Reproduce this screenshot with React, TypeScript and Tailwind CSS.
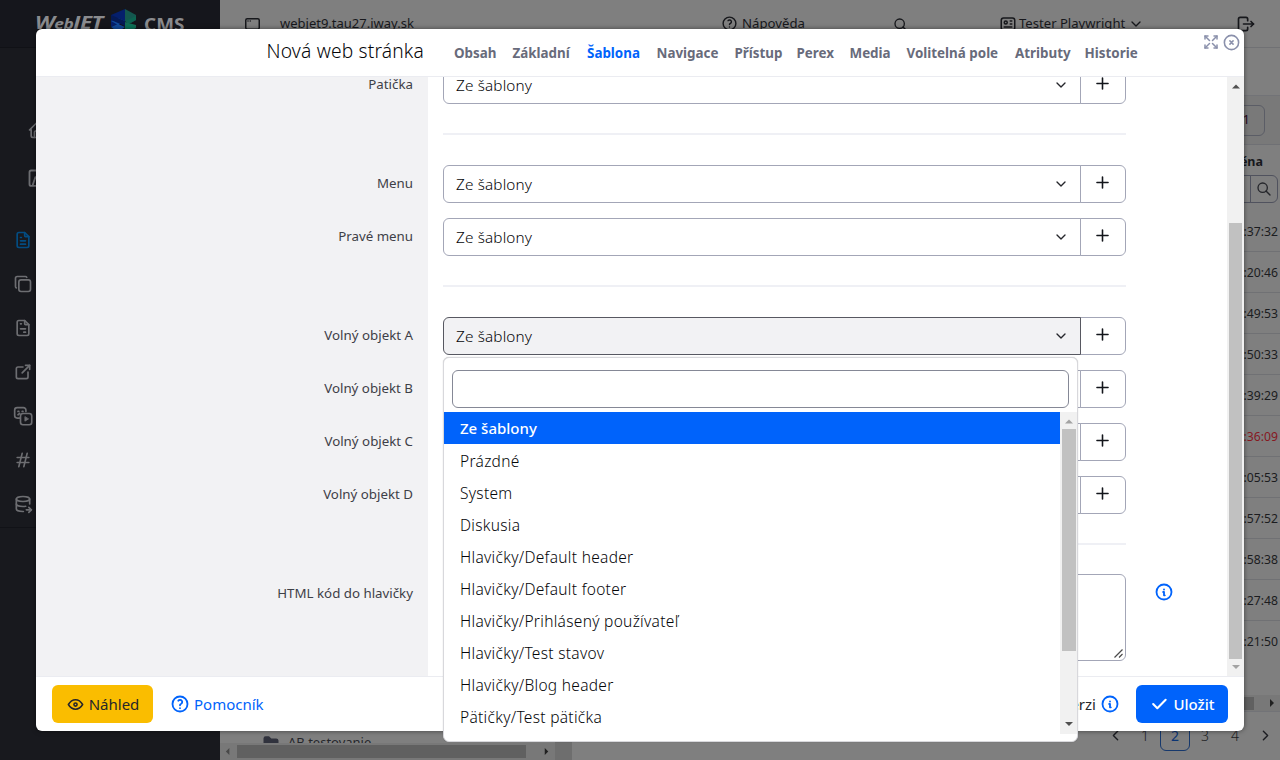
import {
  TbFileText, TbCopy, TbExternalLink, TbHash, TbDatabaseExport, TbHelp, TbInfoCircle, TbEye, TbArrowsMaximize,
  TbCircleX, TbAppWindow, TbId, TbLogout, TbSearch, TbChevronDown, TbChevronLeft, TbChevronRight, TbHome,
  TbPlus, TbCheck, TbFileInvoice, TbFolderFilled,
} from 'react-icons/tb';

const tabs = [
  { label: 'Obsah', cls: 'w-[58.5px]' },
  { label: 'Základní', cls: 'w-[74.5px]' },
  { label: 'Šablona', cls: 'w-[69.5px] text-[#0063fb]' },
  { label: 'Navigace', cls: 'w-[78px]' },
  { label: 'Přístup', cls: 'w-[62px]' },
  { label: 'Perex', cls: 'w-[53px]' },
  { label: 'Media', cls: 'w-[57px]' },
  { label: 'Volitelná pole', cls: 'w-[108.5px]' },
  { label: 'Atributy', cls: 'w-[69.5px]' },
  { label: 'Historie', cls: 'w-[54px]' },
];

const options = [
  'Ze šablony', 'Prázdné', 'System', 'Diskusia', 'Hlavičky/Default header', 'Hlavičky/Default footer',
  'Hlavičky/Prihlásený používateľ', 'Hlavičky/Test stavov', 'Hlavičky/Blog header', 'Pätičky/Test pätička',
];

const times = [
  ':37:32', ':20:46', ':49:53', ':50:33', ':39:29', ':36:09', ':05:53', ':57:52', ':58:38', ':27:48', ':21:50',
];

function Arrow({ dir, cls }: { dir: 'up' | 'down' | 'left' | 'right'; cls: string }) {
  const points = { up: '0,5.500 4,1.500 8,5.500', down: '0,2 4,6 8,2', left: '5,0 1,4 5,8', right: '2,0 6,4 2,8' }[dir];
  return (
    <svg width="8" height="8" viewBox="0 0 8 8" className={cls}>
      <polygon points={points} fill="currentColor" />
    </svg>
  );
}

function PlayCards() {
  return (
    <svg width="20" height="20" viewBox="0 0 24 24" fill="none" stroke="currentColor" strokeWidth="2" strokeLinecap="round" strokeLinejoin="round">
      <path d="M8 14.500H5a3 3 0 0 1-3-3V5a3 3 0 0 1 3-3h7.500a3 3 0 0 1 3 3v1.500M6 6.500h1M11 6.500h1M6 10.500l2-1.500" />
      <rect x="9" y="9" width="13.500" height="13.500" rx="3" />
      <path d="M14.300 13.200v5l4-2.500z" fill="currentColor" strokeWidth="1" />
    </svg>
  );
}

function ChartFrame() {
  return (
    <svg width="20" height="20" viewBox="0 0 24 24" fill="none" stroke="currentColor" strokeWidth="2.200" strokeLinecap="round" strokeLinejoin="round">
      <rect x="3" y="3" width="19" height="18.500" rx="2" />
      <path d="M7 20l3-9 4 4 5-7" />
    </svg>
  );
}

function Logo() {
  return (
    <div className="flex h-[33px] items-end pl-[35px] text-[#8a8b8e]">
      <span className="w-[76px] origin-left scale-x-[1.24] text-[18px] leading-[18px] font-bold whitespace-nowrap italic tracking-[-0.5px]">
        W<span className="text-[14px]">eb</span>JET
      </span>
      <svg width="25" height="24" viewBox="0 0 25 24">
        <path d="M0 6 14 0v12L0 18z" fill="#051f6c" />
        <path d="M0 12l7-3 7 3-7 4zM0 18l7-3 7 3-7 5z" fill="#124a9b" />
        <path d="M0 6l14 6v5L0 11z" fill="#051a55" />
        <path d="M14 0l11 6v5l-5 3-6-2z" fill="#14574f" />
        <path d="M14 12l11-5v4l-8 4z" fill="#0d6350" />
        <path d="M14 13l11 3v3l-8 5-3-2z" fill="#156c55" />
        <path d="M14 17l5-2 6 3-8 4z" fill="#0a7459" />
      </svg>
      <span className="ml-[8px] origin-left scale-x-[1.05] text-[18px] leading-[18px] font-bold">CMS</span>
    </div>
  );
}

function Sidebar() {
  return (
    <aside className="h-full w-[220px] shrink-0 bg-[#18191e] text-[#6d6e72]">
      <div className="h-12 border-b border-[#101116] bg-[#15161c]"><Logo /></div>
      <div className="flex h-[151px] flex-col gap-7 pt-[72px] pl-[27px]">
        <TbHome size={20} />
        <ChartFrame />
      </div>
      <nav className="flex h-[329px] flex-col border-b border-[#111217] pt-[31px] pl-[13px]">
        <div className="flex flex-col gap-6">
          <TbFileText size={20} className="text-[#034c82]" />
          <TbCopy size={20} />
          <TbFileInvoice size={20} />
          <TbExternalLink size={20} />
          <PlayCards />
          <TbHash size={20} />
          <TbDatabaseExport size={20} />
        </div>
      </nav>
    </aside>
  );
}

function Topbar() {
  return (
    <header className="flex h-12 shrink-0 items-center border-b border-[#707174] pl-6 text-[13.500px] text-[#17181c]">
      <TbAppWindow size={18} className="-ml-[9px] w-[35px] shrink-0" />
      <span className="ml-[10px] w-[441px] text-[13px]">webjet9.tau27.iway.sk</span>
      <TbHelp size={17} className="shrink-0" />
      <span className="ml-1 w-[151px] text-[13.200px]">Nápověda</span>
      <TbSearch size={16} className="mt-[2px] shrink-0" />
      <TbId size={18} className="ml-[90px] shrink-0" />
      <span className="ml-[2px] w-[109px] text-[13.100px] whitespace-nowrap">Tester Playwright</span>
      <TbChevronDown size={16} className="shrink-0" />
      <TbLogout size={20} className="ml-[92px] shrink-0" />
    </header>
  );
}

function Background() {
  return (
    <div className="flex h-full">
      <Sidebar />
      <main className="flex min-w-0 flex-1 flex-col bg-[#7f7f7f]">
        <Topbar />
        <div className="h-12 shrink-0 border-b border-[#727377]" />
        <div className="flex h-[49px] shrink-0 items-center justify-end border-b border-[#6f7074] bg-[#797979] pr-[15px]">
          <div className="flex h-[31px] w-[44px] items-center justify-end rounded-md border border-[#5b5d66] pr-[14px] text-[13px] text-[#2b0b1c]">1</div>
        </div>
        <div className="flex h-[30px] shrink-0 items-end justify-end pr-[17px] pb-[3px] text-[12.500px] font-bold text-[#17181c]">Změna</div>
        <div className="flex h-[36px] shrink-0 justify-end pr-[2px]">
          <div className="flex h-7 w-[80px] justify-end rounded-md border border-[#50525e]">
            <div className="flex w-[27px] items-center justify-center border-l border-[#50525e]"><TbSearch size={16} className="text-[#25262b]" /></div>
          </div>
        </div>
        <div className="h-[484px] shrink-0 text-[12.200px] text-[#1b1c20]">
          {times.map((t) => (
            <div key={t} className={t === ':36:09' ? 'flex h-[41px] items-center justify-end border-b border-[#707174] pt-[2px] pr-[2px] text-[#86181f]' : t === ':21:50' ? 'flex h-[41px] items-center justify-end pt-px pr-[2px]' : 'flex h-[41px] items-center justify-end border-b border-[#707174] pt-[2px] pr-[2px]'}>
              {t}
            </div>
          ))}
        </div>
        <div className="flex min-h-0 flex-1">
          <div className="flex w-[335px] flex-col">
            <div className="flex h-[48px] items-start gap-2 overflow-hidden pt-[39px] pl-[42px] text-[13px] leading-4 text-[#25262b]">
              <TbFolderFilled size={18} className="text-[#30323d]" /><span>AB testovanie</span>
            </div>
            <div className="flex h-[17px] items-center bg-[#787878]">
              <div className="flex w-[17px] justify-center"><Arrow dir="left" cls="size-[7px] text-[#484848]" /></div>
              <div className="h-[13px] w-[289px] bg-[#606060]" />
              <div className="ml-[17px]"><Arrow dir="right" cls="size-[7px] text-[#202020]" /></div>
            </div>
          </div>
          <div className="w-[17px] bg-[#6e6e6e]" />
          <div className="flex flex-1 flex-col">
            <div className="flex h-[17px] items-center justify-end border-b border-[#727377] bg-[#787878] pr-1">
              <div className="mr-[14px] h-[13px] w-[300px] bg-[#606060]" />
              <Arrow dir="right" cls="text-[#202020]" />
            </div>
            <div className="flex h-[39px] items-end justify-end text-[14px] font-light text-[#1c1d22]">
              <div className="flex h-[31px] w-[30px] items-center justify-center"><TbChevronLeft size={17} /></div>
              <div className="flex h-[31px] w-[30px] items-center justify-center">1</div>
              <div className="flex h-[31px] w-[30px] items-center justify-center rounded-md border border-[#16386c] font-normal text-[#0b3474]">2</div>
              <div className="flex h-[31px] w-[30px] items-center justify-center">3</div>
              <div className="flex h-[31px] w-[30px] items-center justify-center">4</div>
              <div className="flex h-[31px] w-[30px] items-center justify-center"><TbChevronRight size={17} /></div>
            </div>
          </div>
        </div>
      </main>
    </div>
  );
}

function SelectRow({ label, open }: { label: string; open?: boolean }) {
  return (
    <div className="flex h-[38px] shrink-0">
      <div className="w-[392px] pt-[9px] pr-[15px] text-right text-[13.300px] leading-[18px] text-[#3e4047]">{label}</div>
      <div className="flex w-[698px] pl-[15px]">
        <div className={open ? 'z-10 flex w-[638px] items-center justify-between rounded-l-md border border-[#575861] bg-[#f2f2f4] pr-[11px] pl-3' : 'flex w-[638px] items-center justify-between rounded-l-md border border-[#a3a6b7] bg-white pr-[11px] pl-3'}>
          <span className="text-[15.300px] font-light tracking-[0.15px] text-[#050609]">Ze šablony</span>
          <TbChevronDown size={16} className="text-[#25262b]" />
        </div>
        <div className="-ml-px flex w-[46px] items-center justify-center rounded-r-md border border-[#a3a6b7] pr-[2px] pb-[3px]">
          <TbPlus size={19} className="text-[#13151b]" />
        </div>
      </div>
    </div>
  );
}

function Rule({ cls }: { cls: string }) {
  return (
    <div className={cls}>
      <div className="h-[2px] w-[683px] bg-[#eff0f5]" />
    </div>
  );
}

function FormBody() {
  return (
    <div className="flex h-[599px] overflow-hidden bg-[linear-gradient(to_right,#f2f2f4_392px,#ffffff_392px)]">
      <div className="-mt-[11px] flex flex-1 flex-col">
        <SelectRow label="Patička" />
        <Rule cls="h-[61px] shrink-0 pt-[29px] pl-[407px]" />
        <div className="flex shrink-0 flex-col gap-[15px]">
          <SelectRow label="Menu" />
          <SelectRow label="Pravé menu" />
        </div>
        <Rule cls="h-[61px] shrink-0 pt-[29px] pl-[407px]" />
        <div className="flex shrink-0 flex-col gap-[15px]">
          <SelectRow label="Volný objekt A" open />
          <SelectRow label="Volný objekt B" />
          <SelectRow label="Volný objekt C" />
          <SelectRow label="Volný objekt D" />
        </div>
        <Rule cls="h-[60px] shrink-0 pt-[29px] pl-[407px]" />
        <div className="flex shrink-0">
          <div className="w-[407px] pt-[10px] pr-[30px] text-right text-[13.300px] leading-[18px] text-[#3e4047]">HTML kód do hlavičky</div>
          <div className="flex h-[87px] w-[683px] items-end justify-end rounded-md border border-[#a3a6b7] bg-white p-[2px]">
            <svg width="9" height="9" viewBox="0 0 9 9" stroke="#4a4a4a" strokeWidth="1.200"><path d="M0.500 8.500l8-8M5 8.500L8.500 5" /></svg>
          </div>
          <TbInfoCircle size={20} strokeWidth={2.2} className="mt-2 ml-[27.500px] text-[#0063fb]" />
        </div>
      </div>
      <div className="flex w-[17px] flex-col items-center bg-[#f1f1f1]">
        <Arrow dir="up" cls="mt-[6px] text-[#505050]" />
        <div className="mt-[132px] h-[436px] w-[13px] bg-[#c1c1c1]" />
        <Arrow dir="down" cls="mt-[4px] text-[#a3a3a3]" />
      </div>
    </div>
  );
}

function Dialog() {
  return (
    <section className="absolute top-[29px] left-[36px] flex h-[702px] w-[1208px] flex-col overflow-hidden rounded-md bg-white shadow-[0_0_5px_rgba(0,0,0,0.5)]">
      <header className="flex h-12 shrink-0 items-center border-b border-[#ebecf1]">
        <h1 className="w-[388px] pb-[2px] text-right text-[19.200px] font-light tracking-[0.18px] text-[#050609]">Nová web stránka</h1>
        <nav className="ml-[30px] flex flex-1 pt-[2px] text-[13.400px] font-bold whitespace-nowrap text-[#686b7b]">
          {tabs.map((t) => (
            <span key={t.label} className={t.cls}>{t.label}</span>
          ))}
        </nav>
        <div className="flex gap-[2px] pr-[3px] pb-[21px] text-[#8a90ab]">
          <TbArrowsMaximize size={18} />
          <TbCircleX size={19} />
        </div>
      </header>
      <FormBody />
      <footer className="flex flex-1 items-center border-t border-[#ebecf1] px-4 text-[15px]">
        <button className="flex h-[38px] w-[101px] items-center justify-center gap-1 rounded-md bg-[#fabd00] text-[#25262b]">
          <TbEye size={19} />Náhled
        </button>
        <button className="ml-[17px] flex items-center gap-1 text-[#0063fb]"><TbHelp size={20} strokeWidth={2.2} />Pomocník</button>
        <span className="ml-auto text-[#25262b]">Uložit pracovní verzi</span>
        <TbInfoCircle size={20} strokeWidth={2.2} className="ml-[4px] text-[#0063fb]" />
        <button className="ml-[16px] flex h-[38px] w-[92px] items-center justify-center gap-1 rounded-md bg-[#0063fb] text-[15px] font-medium text-white">
          <TbCheck size={20} strokeWidth={2.5} />Uložit
        </button>
      </footer>
    </section>
  );
}

function OptionMenu() {
  return (
    <div className="absolute top-[357px] left-[443px] flex h-[385px] w-[635px] flex-col rounded-md border border-[#d8d8dc] bg-white pt-3 shadow-[0_0_1px_rgba(0,0,0,0.3)]">
      <div className="mx-2 h-[38px] shrink-0 rounded-md border border-[#858896]" />
      <div className="mt-1 flex h-[322px]">
        <ul className="w-[616px] overflow-hidden text-[15.500px] leading-5 font-light tracking-[0.3px] text-[#050609]">
          {options.map((o, i) => (
            <li key={o} className={i === 0 ? 'flex h-8 items-center bg-[#0063fb] pl-4 text-[15px] font-medium tracking-normal text-white' : 'flex h-8 items-center pt-px pl-4'}>{o}</li>
          ))}
        </ul>
        <div className="flex w-[17px] flex-col items-center bg-[#f1f1f1]">
          <Arrow dir="up" cls="mt-[6px] text-[#a3a3a3]" />
          <div className="mt-[3px] h-[222px] w-[14px] bg-[#c1c1c1]" />
          <Arrow dir="down" cls="mt-auto mb-[6px] text-[#505050]" />
        </div>
      </div>
    </div>
  );
}

export default function App() {
  return (
    <div className="relative h-[760px] w-[1280px] overflow-hidden [font-family:'Noto_Sans',sans-serif]">
      <Background />
      <Dialog />
      <OptionMenu />
    </div>
  );
}
